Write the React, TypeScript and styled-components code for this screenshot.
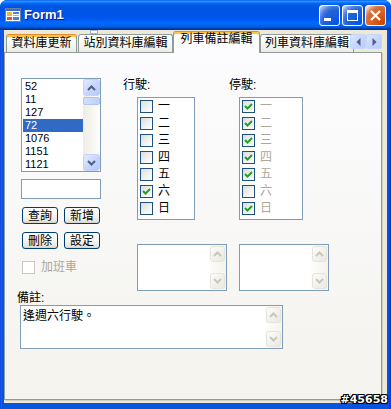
import React from "react";
import styled, { createGlobalStyle, css } from "styled-components";

const FONT = `"Liberation Sans", "Noto Sans CJK TC", sans-serif`;

const GlobalStyle = createGlobalStyle`
  html, body { margin: 0; padding: 0; background: #ffffff; }
  body { width: 391px; height: 409px; overflow: hidden; }
  *, *::before, *::after { box-sizing: border-box; }
`;

const Window = styled.div`
  position: relative;
  width: 391px;
  height: 409px;
  display: flex;
  flex-direction: column;
  border-radius: 7px 7px 0 0;
  overflow: hidden;
  background: linear-gradient(to right, #0831d9 0, #166aee 1px, #0855dd 2px, #0855dd 388px, #0831d9 391px);
  font-family: ${FONT};
  color: #000;
`;

const TitleBar = styled.div`
  flex: none;
  height: 30px;
  display: flex;
  align-items: center;
  padding: 0 5px 0 5px;
  background: linear-gradient(
    to bottom,
    #0058ee 0%,
    #3593ff 4%,
    #288eff 6%,
    #127dff 8%,
    #036ffc 10%,
    #0262ee 14%,
    #0057e5 20%,
    #0054e3 24%,
    #0055eb 56%,
    #005bf5 66%,
    #026afe 76%,
    #0062ef 86%,
    #0052d6 92%,
    #0040ab 94%,
    #003092 100%
  );
`;

const AppIcon = styled.svg`
  flex: none;
  width: 16px;
  height: 16px;
`;

const Title = styled.div`
  margin-left: 3px;
  flex: 1;
  color: #ffffff;
  font: bold 13px/16px ${FONT};
  text-shadow: 1px 1px 0 #0a1883;
`;

const CaptionButtons = styled.div`
  display: flex;
  gap: 2px;
`;

const CaptionButton = styled.div<{ $close?: boolean }>`
  width: 21px;
  height: 21px;
  border: 1px solid #ffffff;
  border-radius: 3px;
  display: flex;
  align-items: center;
  justify-content: center;
  background: ${(p) =>
    p.$close
      ? "radial-gradient(circle at 90% 90%, #cc4600 0%, #dc6527 55%, #cd7546 70%, #ffccb2 90%, #ffffff 100%)"
      : "radial-gradient(circle at 90% 90%, #0054e9 0%, #2263d5 55%, #4479e4 70%, #a3bbec 90%, #ffffff 100%)"};
`;

const Client = styled.div`
  flex: 1;
  margin: 0 4px 6px 4px;
  background: #ece9d8;
  display: flex;
  flex-direction: column;
`;

const TabControl = styled.div`
  width: 378px;
  flex: 1;
  display: flex;
  flex-direction: column;
  margin-bottom: 3px;
`;

const TabStrip = styled.div`
  position: relative;
  flex: none;
  height: 22px;
  display: flex;
  align-items: flex-end;
  gap: 1px;
  padding-left: 2px;
`;

const Tab = styled.div<{ $w: number; $active?: boolean; $hot?: boolean }>`
  position: relative;
  flex: none;
  width: ${(p) => p.$w}px;
  height: 18px;
  border: 1px solid #919b9c;
  border-bottom: none;
  border-radius: 3px 3px 0 0;
  background: linear-gradient(to bottom, #ffffff 0%, #f7f7f4 50%, #ecebe6 100%);
  font-size: 12px;
  line-height: 16px;
  text-align: center;
  white-space: nowrap;
  overflow: hidden;
  ${(p) =>
    (p.$hot || p.$active) &&
    css`
      border-top-color: #e68b2c;
      box-shadow: inset 0 2px 0 #ffc83c;
    `}
  ${(p) =>
    p.$active &&
    css`
      height: 22px;
      margin: 0 -1px -1px -1px;
      z-index: 1;
      background: #fcfcfe;
      line-height: 15px;
    `}
`;

const TabScroller = styled.div`
  position: absolute;
  right: 0;
  top: 4px;
  display: flex;
  z-index: 2;
`;

const TabScrollButton = styled.div`
  width: 16px;
  height: 15px;
  display: flex;
  align-items: center;
  justify-content: center;
  background: linear-gradient(135deg, #dde7fe 0%, #c3d4fc 60%, #b9cdfa 100%);
  border: 1px solid #c6d6fb;
  border-radius: 2px;
`;

const Marker = styled.span`
  position: absolute;
  left: 86px;
  top: 0;
  width: 8px;
  height: 4px;
  border: 1px solid #9fb3cf;
  background: #ffffff;
`;

const Panel = styled.div`
  flex: 1;
  border: 1px solid #919b9c;
  box-shadow: 1px 1px 0 #d0cec2;
  background: linear-gradient(to bottom, #fcfcfe 0%, #f4f3ee 100%);
  padding: 25px 0 0 16px;
  display: flex;
  flex-direction: column;
`;

const TopRow = styled.div`
  display: flex;
  align-items: flex-start;
`;

const LeftCol = styled.div`
  width: 80px;
  display: flex;
  flex-direction: column;
`;

const ListBox = styled.div`
  width: 80px;
  height: 94px;
  border: 1px solid #7f9db9;
  background: #ffffff;
  display: flex;
`;

const ListItems = styled.div`
  flex: 1;
  padding: 1px 0 0 1px;
`;

const ListItem = styled.div<{ $sel?: boolean }>`
  height: 13px;
  line-height: 13px;
  font-size: 11px;
  padding-left: 2px;
  ${(p) =>
    p.$sel &&
    css`
      background: #316ac5;
      color: #ffffff;
    `}
`;

const ScrollBar = styled.div<{ $off?: boolean }>`
  flex: none;
  width: 17px;
  display: flex;
  flex-direction: column;
  padding: ${(p) => (p.$off ? "1px" : "0")};
  background: ${(p) =>
    p.$off
      ? "linear-gradient(to right, #fdfdfb, #f4f3ee)"
      : "linear-gradient(to right, #eeede5, #fefefb)"};
`;

const ScrollButton = styled.div<{ $off?: boolean }>`
  flex: none;
  height: ${(p) => (p.$off ? 16 : 17)}px;
  border: 1px solid ${(p) => (p.$off ? "#e6e4da" : "#c3d3fd")};
  border-radius: 3px;
  display: flex;
  align-items: center;
  justify-content: center;
  color: ${(p) => (p.$off ? "#c9c7ba" : "#4d6185")};
  background: ${(p) =>
    p.$off
      ? "linear-gradient(135deg, #fcfcfa 0%, #f1f0ea 60%, #e9e8e0 100%)"
      : "linear-gradient(135deg, #e4ecfe 0%, #c6d5fc 55%, #b5c9f8 100%)"};
`;

const ScrollTrack = styled.div`
  flex: 1;
`;

const ScrollThumb = styled.div`
  flex: none;
  height: 8px;
  margin-top: 1px;
  border: 1px solid #b2c5f2;
  border-radius: 2px;
  background: linear-gradient(to right, #d4e0fd, #bcd0fa);
`;

const TextBox = styled.div`
  width: 80px;
  height: 20px;
  margin-top: 7px;
  border: 1px solid #7f9db9;
  background: #ffffff;
`;

const ButtonRow = styled.div`
  display: flex;
  gap: 6px;
  margin-top: 8px;
  padding-left: 1px;
`;

const Button = styled.button`
  width: 36px;
  height: 17px;
  padding: 0;
  border: 1px solid #003c74;
  border-radius: 3px;
  background: linear-gradient(to bottom, #ffffff 0%, #f4f4f0 55%, #e6e5de 88%, #d6d0c5 100%);
  font: 12px/14px ${FONT};
  color: #000000;
`;

const CheckRow = styled.div<{ $dim?: boolean }>`
  display: flex;
  align-items: center;
  gap: 5px;
  height: 15px;
  font-size: 12px;
  line-height: 15px;
  color: ${(p) => (p.$dim ? "#aca899" : "#000000")};
`;

const ExtraRow = styled(CheckRow)`
  margin-top: 11px;
  padding-left: 1px;
  gap: 6px;
`;

const Box = styled.span<{ $dim?: boolean }>`
  flex: none;
  width: 13px;
  height: 13px;
  border: 1px solid ${(p) => (p.$dim ? "#cac8bb" : "#1c5180")};
  background: ${(p) =>
    p.$dim ? "#ffffff" : "linear-gradient(135deg, #dcdcd7 0%, #f3f3f1 60%, #ffffff 100%)"};
  display: flex;
  align-items: center;
  justify-content: center;
`;

const DaysArea = styled.div`
  margin-left: 22px;
  display: grid;
  grid-template-columns: 106px auto;
`;

const DayCol = styled.div<{ $indent: number }>`
  display: flex;
  flex-direction: column;
  & > :not(:first-child) {
    margin-left: ${(p) => p.$indent}px;
  }
`;

const FieldLabel = styled.div`
  height: 14px;
  font-size: 12px;
  line-height: 14px;
  white-space: nowrap;
`;

const CheckList = styled.div<{ $w: number }>`
  width: ${(p) => p.$w}px;
  height: 123px;
  margin-top: 5px;
  border: 1px solid #7f9db9;
  background: #ffffff;
  padding: 0 0 0 2px;
`;

const CheckItem = styled(CheckRow)`
  height: 17px;
  line-height: 17px;
`;

const Memo = styled.div<{ $w: number; $h: number }>`
  width: ${(p) => p.$w}px;
  height: ${(p) => p.$h}px;
  border: 1px solid #7f9db9;
  background: #ffffff;
  display: flex;
`;

const MemoText = styled.div`
  flex: 1;
  padding: 3px 2px;
  font-size: 12px;
  line-height: 14px;
`;

const SmallMemo = styled(Memo)`
  margin-top: 24px;
`;

const RemarkLabel = styled(FieldLabel)`
  margin-left: -4px;
`;

const RemarkMemo = styled(Memo)`
  margin-left: -1px;
`;

const Watermark = styled.div`
  position: absolute;
  right: 3px;
  bottom: 3px;
  font: bold 11px/12px "DejaVu Sans", sans-serif;
  color: #ffffff;
  letter-spacing: 0;
  text-shadow: 1px 0 0 #000, -1px 0 0 #000, 0 1px 0 #000, 0 -1px 0 #000, 1px 1px 0 #000,
    -1px -1px 0 #000, 1px -1px 0 #000, -1px 1px 0 #000;
`;

const Chevron = ({ dir }: { dir: "up" | "down" }) => (
  <svg width="9" height="6" viewBox="0 0 9 6">
    <polyline
      points={dir === "up" ? "1,5 4.5,1.5 8,5" : "1,1 4.5,4.5 8,1"}
      fill="none"
      stroke="currentColor"
      strokeWidth="2"
    />
  </svg>
);

const Tick = () => (
  <svg width="11" height="11" viewBox="0 0 11 11">
    <polyline points="2,5 4.5,7.5 9,3" fill="none" stroke="#21a121" strokeWidth="2" />
  </svg>
);

const VScroll = ({ off, thumb }: { off?: boolean; thumb?: boolean }) => (
  <ScrollBar $off={off}>
    <ScrollButton $off={off}>
      <Chevron dir="up" />
    </ScrollButton>
    {thumb && <ScrollThumb />}
    <ScrollTrack />
    <ScrollButton $off={off}>
      <Chevron dir="down" />
    </ScrollButton>
  </ScrollBar>
);

const trains = ["52", "11", "127", "72", "1076", "1151", "1121"];
const days = ["一", "二", "三", "四", "五", "六", "日"];
const runs = [false, false, false, false, false, true, false];
const stops = [true, true, true, true, true, false, true];

const tabs = [
  { label: "資料庫更新", w: 71, hot: true },
  { label: "站別資料庫編輯", w: 95 },
  { label: "列車備註編輯", w: 87, active: true },
  { label: "列車資料庫編輯", w: 94 },
];

export default function App() {
  return (
    <>
      <GlobalStyle />
      <Window>
        <TitleBar>
          <AppIcon viewBox="0 0 16 16">
            <rect x="0.5" y="1.5" width="15" height="13" fill="#ffffff" stroke="#6b7fa6" />
            <rect x="1" y="2" width="14" height="2" fill="#3a6bd0" />
            <rect x="2" y="5" width="5" height="4" fill="#f5b13b" />
            <rect x="8" y="5" width="6" height="2" fill="#4f7fd8" />
            <rect x="8" y="8" width="6" height="1" fill="#9fb4dc" />
            <rect x="2" y="10" width="5" height="3" fill="#e0553a" />
            <rect x="8" y="10" width="6" height="3" fill="#4f7fd8" />
          </AppIcon>
          <Title>Form1</Title>
          <CaptionButtons>
            <CaptionButton>
              <svg width="19" height="19" viewBox="0 0 19 19">
                <rect x="4" y="12" width="7" height="3" fill="#ffffff" />
              </svg>
            </CaptionButton>
            <CaptionButton>
              <svg width="19" height="19" viewBox="0 0 19 19">
                <rect x="4.5" y="4.5" width="10" height="10" fill="none" stroke="#ffffff" />
                <rect x="4" y="4" width="11" height="3" fill="#ffffff" />
              </svg>
            </CaptionButton>
            <CaptionButton $close>
              <svg width="19" height="19" viewBox="0 0 19 19">
                <path d="M5 5 L14 14 M14 5 L5 14" stroke="#ffffff" strokeWidth="2.2" />
              </svg>
            </CaptionButton>
          </CaptionButtons>
        </TitleBar>
        <Client>
          <TabControl>
            <TabStrip>
              <Marker />
              {tabs.map((t) => (
                <Tab key={t.label} $w={t.w} $hot={t.hot} $active={t.active}>
                  {t.label}
                </Tab>
              ))}
              <TabScroller>
                <TabScrollButton>
                  <svg width="5" height="8" viewBox="0 0 5 8">
                    <polygon points="4.5,0 0.5,4 4.5,8" fill="#4d6185" />
                  </svg>
                </TabScrollButton>
                <TabScrollButton>
                  <svg width="5" height="8" viewBox="0 0 5 8">
                    <polygon points="0.5,0 4.5,4 0.5,8" fill="#4d6185" />
                  </svg>
                </TabScrollButton>
              </TabScroller>
            </TabStrip>
            <Panel>
              <TopRow>
                <LeftCol>
                  <ListBox>
                    <ListItems>
                      {trains.map((t) => (
                        <ListItem key={t} $sel={t === "72"}>
                          {t}
                        </ListItem>
                      ))}
                    </ListItems>
                    <VScroll thumb />
                  </ListBox>
                  <TextBox />
                  <ButtonRow>
                    <Button>查詢</Button>
                    <Button>新增</Button>
                  </ButtonRow>
                  <ButtonRow>
                    <Button>刪除</Button>
                    <Button>設定</Button>
                  </ButtonRow>
                  <ExtraRow $dim>
                    <Box $dim />
                    加班車
                  </ExtraRow>
                </LeftCol>
                <DaysArea>
                  <DayCol $indent={14}>
                    <FieldLabel>行駛:</FieldLabel>
                    <CheckList $w={58}>
                      {days.map((d, i) => (
                        <CheckItem key={d}>
                          <Box>{runs[i] && <Tick />}</Box>
                          {d}
                        </CheckItem>
                      ))}
                    </CheckList>
                    <SmallMemo $w={90} $h={47}>
                      <MemoText />
                      <VScroll off />
                    </SmallMemo>
                  </DayCol>
                  <DayCol $indent={10}>
                    <FieldLabel>停駛:</FieldLabel>
                    <CheckList $w={64}>
                      {days.map((d, i) => (
                        <CheckItem key={d} $dim>
                          <Box>{stops[i] && <Tick />}</Box>
                          {d}
                        </CheckItem>
                      ))}
                    </CheckList>
                    <SmallMemo $w={90} $h={47}>
                      <MemoText />
                      <VScroll off />
                    </SmallMemo>
                  </DayCol>
                </DaysArea>
              </TopRow>
              <RemarkLabel>備註:</RemarkLabel>
              <RemarkMemo $w={263} $h={44}>
                <MemoText>逢週六行駛。</MemoText>
                <VScroll off />
              </RemarkMemo>
            </Panel>
          </TabControl>
        </Client>
        <Watermark>#45658</Watermark>
      </Window>
    </>
  );
}
